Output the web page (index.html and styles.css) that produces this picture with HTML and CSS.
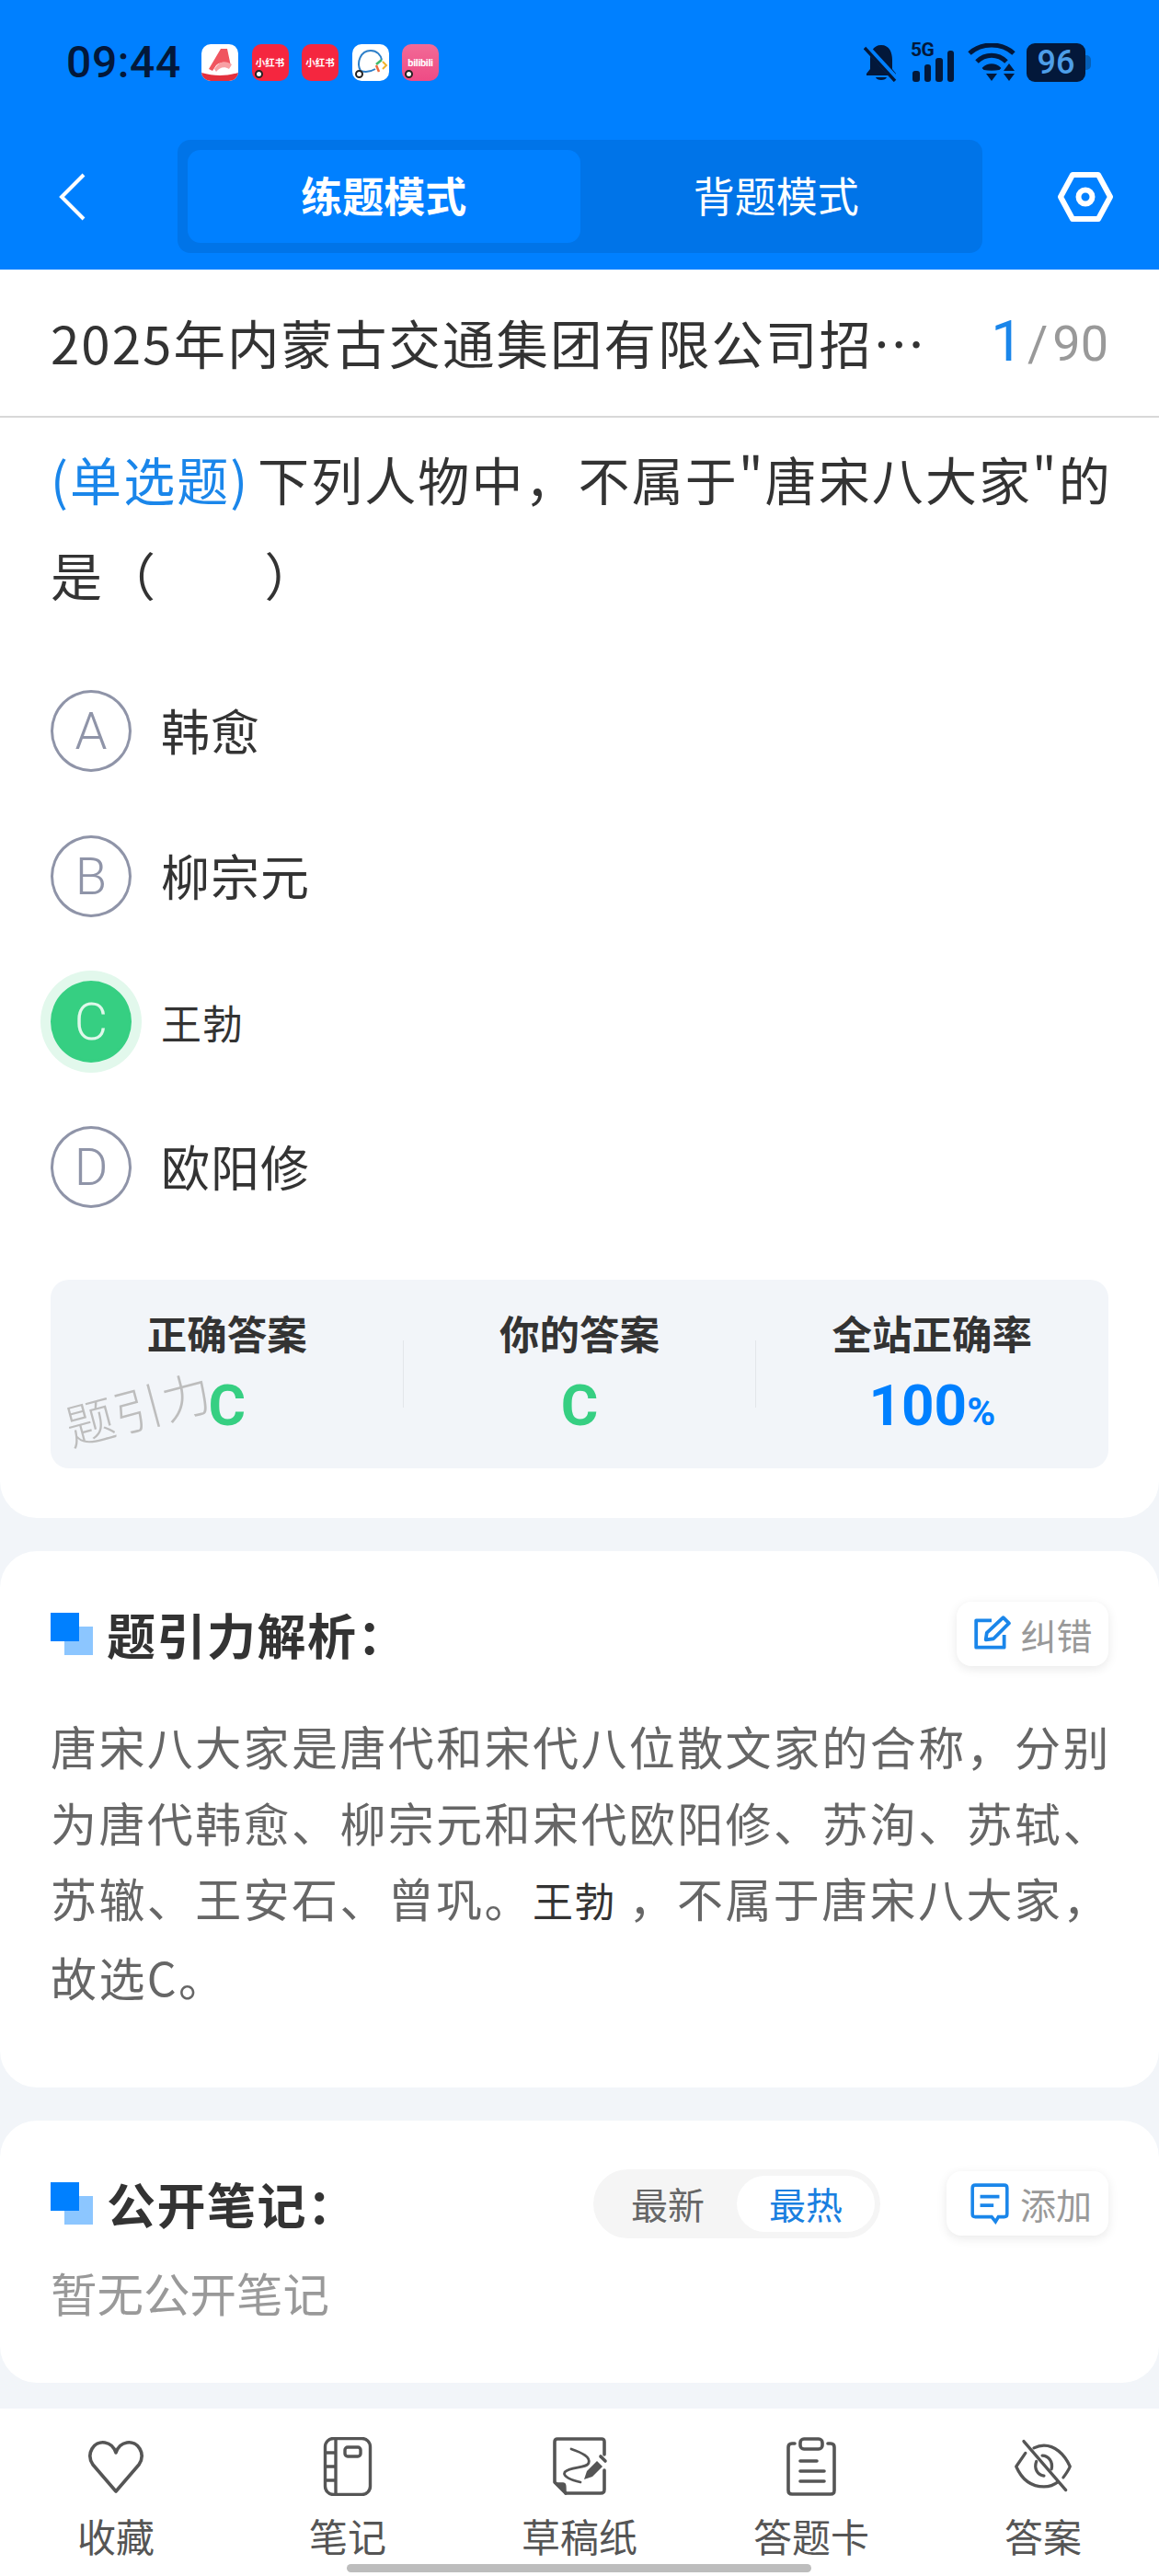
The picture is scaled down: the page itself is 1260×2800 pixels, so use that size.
FILE: index.html
```html
<!DOCTYPE html>
<html lang="zh">
<head>
<meta charset="utf-8">
<title>练题模式</title>
<link rel="stylesheet" href="styles.css">
</head>
<body>
<div class="page">
  <header class="top">
    <div class="status">
      <span class="time">09:44</span>
      <div class="apps">
        <span class="app app-white">
          <svg viewBox="0 0 40 40"><path d="M8 27 L21 5 L28 5 L32 24 L26 25 C24 20 20 19 16 23 L12 29 Z" fill="#f0555f"/><path d="M14 27 C20 17 27 18 33 22 L30 27 C25 24 20 25 16 30Z" fill="#f8a0a4"/><path d="M0 31 C14 35 26 35 40 31 V40 H0Z" fill="#e3303d"/></svg>
        </span>
        <span class="app app-red"><span class="app-text">小红书</span><i class="dot"></i></span>
        <span class="app app-red"><span class="app-text">小红书</span></span>
        <span class="app app-white">
          <svg viewBox="0 0 40 40"><path d="M9 29 C4 20 9 7 20 7 C27 7 31 12 32 17" fill="none" stroke="#2d7fc9" stroke-width="2"/><path d="M9 29 C15 31 20 30 25 27" fill="none" stroke="#2d7fc9" stroke-width="2"/><path d="M32 17 L26 22" stroke="#3fb86b" stroke-width="2.5"/><path d="M26 23 L29 30" stroke="#ef6a3c" stroke-width="2.5"/><path d="M33 19 L37 23 L33 27" fill="none" stroke="#f0b429" stroke-width="2"/></svg>
          <i class="dot"></i>
        </span>
        <span class="app app-pink"><span class="app-text app-text-sm">bilibili</span><i class="dot"></i></span>
      </div>
      <div class="sys">
        <svg class="sys-bell" viewBox="0 0 38 42"><path d="M19 2 C28 2 31 10 31 18 V28 L35 33 V35 H3 V33 L7 28 V18 C7 10 10 2 19 2Z M13 37 H25 C24 41 14 41 13 37Z" fill="#03183a"/><path d="M2 3 L36 40" stroke="#0080ff" stroke-width="7"/><path d="M1 5 L34 41" stroke="#03183a" stroke-width="3.4"/></svg>
        <span class="sig">
          <span class="sig-5g">5G</span>
          <span class="bars"><i class="b1"></i><i class="b2"></i><i class="b3"></i><i class="b4"></i></span>
        </span>
        <svg class="sys-wifi" viewBox="0 0 52 42"><g fill="none" stroke="#03183a" stroke-width="5"><path d="M2 11 C15 -1 37 -1 50 11"/><path d="M10 20 C19 11 33 11 42 20"/></g><path d="M17 27 C22 22 30 22 35 27 L34 28 C30 29 22 29 18 28Z" fill="#03183a" stroke="#03183a" stroke-width="2"/><path d="M20 33 H32 L26 41Z" fill="#03183a"/><path d="M47 23 L53 31 H41Z M41 34 H53 L47 42Z" fill="#03183a" transform="translate(-2 -1)"/></svg>
        <span class="batt"><span class="batt-num">96</span></span>
      </div>
    </div>
    <nav class="nav">
      <svg class="back" viewBox="0 0 30 52"><path d="M27 2 L3 26 L27 50" fill="none" stroke="#fff" stroke-width="4"/></svg>
      <div class="seg">
        <span class="seg-item seg-on">练题模式</span>
        <span class="seg-item">背题模式</span>
      </div>
      <svg class="hex" viewBox="0 0 60 54"><path d="M16 3 H44 L57 27 L44 51 H16 L3 27Z" fill="none" stroke="#fff" stroke-width="6" stroke-linejoin="round"/><circle cx="30" cy="27" r="7.5" fill="none" stroke="#fff" stroke-width="6"/></svg>
    </nav>
  </header>

  <main class="main">
    <section class="card card-q">
      <div class="title-row">
        <span class="title-text">2025年内蒙古交通集团有限公司招…</span>
        <span class="count"><b class="count-now">1</b><span class="count-sep">/</span><span>90</span></span>
      </div>
      <div class="q-body">
        <p class="question"><span class="qtype">(单选题)</span> 下列人物中，不属于"唐宋八大家"的<br>是（　　）</p>
        <ul class="options">
          <li class="opt"><span class="circle">A</span><span class="opt-text">韩愈</span></li>
          <li class="opt"><span class="circle">B</span><span class="opt-text">柳宗元</span></li>
          <li class="opt"><span class="circle circle-on">C</span><span class="opt-text opt-small">王勃</span></li>
          <li class="opt"><span class="circle">D</span><span class="opt-text">欧阳修</span></li>
        </ul>
        <div class="stats">
          <div class="stat"><span class="stat-label">正确答案</span><span class="stat-val green">C</span></div>
          <div class="stat stat-mid"><span class="stat-label">你的答案</span><span class="stat-val green">C</span></div>
          <div class="stat"><span class="stat-label">全站正确率</span><span class="stat-val blue">100<small class="pct">%</small></span></div>
          <span class="watermark">题引力</span>
        </div>
      </div>
    </section>

    <section class="card card-a">
      <div class="head">
        <h2 class="h"><i class="mark"></i>题引力解析：</h2>
        <span class="mini">
          <svg class="mini-ic" viewBox="0 0 40 40"><path d="M33 21 V34 H4 V6 H20" fill="none" stroke="#1a86ea" stroke-width="3.6" stroke-linejoin="round"/><path d="M14 26 L15 19 L32 3 L38 9 L22 25Z" fill="none" stroke="#1a86ea" stroke-width="3.6" stroke-linejoin="round"/></svg>
          纠错
        </span>
      </div>
      <p class="explain">唐宋八大家是唐代和宋代八位散文家的合称，分别为唐代韩愈、柳宗元和宋代欧阳修、苏洵、苏轼、苏辙、王安石、曾巩。<span class="explain-em">王勃</span> ，不属于唐宋八大家，<span class="nb">故选C。</span></p>
    </section>

    <section class="card card-n">
      <div class="head">
        <h2 class="h"><i class="mark"></i>公开笔记：</h2>
        <div class="head-right">
          <div class="toggle"><span class="tg">最新</span><span class="tg tg-on">最热</span></div>
          <span class="mini mini-add">
            <svg class="mini-ic" viewBox="0 0 40 44"><path d="M5 3 H35 C37 3 38 4 38 6 V33 C38 35 37 36 35 36 H29 L26 41 L22 36 H5 C3 36 2 35 2 33 V6 C2 4 3 3 5 3Z" fill="none" stroke="#1a86ea" stroke-width="3.4"/><path d="M10 15 H30 M10 24 H24" stroke="#1a86ea" stroke-width="3.6"/></svg>
            添加
          </span>
        </div>
      </div>
      <p class="empty">暂无公开笔记</p>
    </section>
  </main>

  <footer class="tabs">
    <div class="tab">
      <svg class="tab-ic" viewBox="0 0 64 64"><path d="M32 59 L7 30 C-1 18 8 4 20 6 C26 7 30 11 32 17 C34 11 38 7 44 6 C56 4 65 18 57 30Z" fill="none" stroke="#555" stroke-width="3.6" stroke-linejoin="round"/></svg>
      <span>收藏</span>
    </div>
    <div class="tab">
      <svg class="tab-ic" viewBox="0 0 64 64"><g fill="none" stroke="#555" stroke-width="3.4"><rect x="7.5" y="1.5" width="49" height="61" rx="9"/><path d="M19 2 V62 M8 17 H19 M8 32 H19 M8 47 H19"/><rect x="29" y="11" width="17" height="10" rx="3"/></g></svg>
      <span>笔记</span>
    </div>
    <div class="tab">
      <svg class="tab-ic" viewBox="0 0 64 64"><g fill="none" stroke="#555" stroke-width="3.6" stroke-linejoin="round" stroke-linecap="round"><path d="M17 61 H55 C58 61 59 60 59 57 V36"/><path d="M59 19 V5 C59 3 58 2 56 2 H8 C6 2 5 3 5 5 V49 L17 61"/><path d="M23 13 C35 17 44 22 42 28 C40 34 22 32 16 38 C13 43 24 47 33 49" stroke-width="2.8"/></g><path d="M5 50 H14 C17 50 17 52 17 61Z" fill="#555" stroke="#555" stroke-width="1.5" stroke-linejoin="round"/><path d="M37 46 L40 37 L51 26 L57 32 L46 43Z" fill="#555"/><path d="M55 21 L60 26" stroke="#555" stroke-width="3.6" stroke-linecap="round"/></svg>
      <span>草稿纸</span>
    </div>
    <div class="tab">
      <svg class="tab-ic" viewBox="0 0 64 64"><g fill="none" stroke="#555" stroke-width="3.6" stroke-linecap="round" stroke-linejoin="round"><path d="M14 7 H11 C8 7 7 9 7 11 V58 C7 61 9 62 11 62 H53 C56 62 57 61 57 58 V11 C57 9 56 7 53 7 H50"/><rect x="20" y="2" width="24" height="11" rx="4"/><path d="M20 26 H38 M20 37 H46 M20 48 H46"/></g></svg>
      <span>答题卡</span>
    </div>
    <div class="tab">
      <svg class="tab-ic" viewBox="0 0 70 64"><g fill="none" stroke="#555" stroke-width="3.6" stroke-linecap="round" stroke-linejoin="round"><path d="M14 16 L3 32 C10 48 22 56 36 56 C42 56 48 54 53 50"/><path d="M24 10 C28 8 32 7 36 7 C48 7 60 16 67 32 C65 37 62 41 59 45"/><path d="M12 2 L62 60"/><path d="M27 26 C24 34 28 42 36 43"/><path d="M34 19 C41 19 47 26 45 35"/></g></svg>
      <span>答案</span>
    </div>
    <i class="home"></i>
  </footer>
</div>
</body>
</html>
```

FILE: styles.css
```css
* { box-sizing: border-box; }
html, body { margin: 0; padding: 0; }
body {
  width: 1260px;
  background: #f2f5f9;
  font-family: "Noto Sans CJK SC", "Noto Sans", sans-serif;
  color: #333;
}
.page { position: relative; width: 1260px; height: 2800px; overflow: hidden; display: flex; flex-direction: column; }
p, h2, ul { margin: 0; padding: 0; }
ul { list-style: none; }

.top { height: 293px; background: #0080ff; flex: none; }
.status { display: flex; align-items: center; height: 136px; padding: 0 0 0 72px; }
.time { font: 500 48px/1 "Roboto", sans-serif; color: #03183a; width: 147px; letter-spacing: .6px; }
.apps { display: flex; gap: 14.5px; }
.app { position: relative; width: 40px; height: 40px; border-radius: 10px; display: flex; align-items: center; justify-content: center; overflow: visible; }
.app svg { width: 40px; height: 40px; border-radius: 10px; display: block; }
.app-white { background: #fff; }
.app-red { background: #f5263f; }
.app-pink { background: linear-gradient(#f26a96, #ee4b85); }
.app-text { color: #fff; font-size: 10.5px; font-weight: 700; line-height: 1; white-space: nowrap; }
.app-text-sm { font: 700 11px/1 "Roboto", sans-serif; letter-spacing: -.3px; }
.dot { position: absolute; left: 3px; bottom: 3px; width: 9px; height: 9px; border-radius: 50%; background: #fff; border: 2.5px solid #222; }
.sys { margin-left: auto; display: flex; align-items: center; margin-right: 80px; height: 42px; }
.sys-bell { width: 38px; height: 42px; margin-right: 13px; }
.sig { position: relative; width: 50px; height: 42px; margin-right: 12px; }
.sig-5g { position: absolute; left: 0; top: -4px; font: 700 21px/22px "Roboto", sans-serif; color: #03183a; letter-spacing: -.5px; }
.bars { position: absolute; left: 2px; bottom: 0; display: flex; align-items: flex-end; gap: 5px; }
.bars i { display: block; width: 7.5px; background: #03183a; border-radius: 3px; }
.b1 { height: 12px; } .b2 { height: 19px; } .b3 { height: 26px; } .b4 { height: 34px; }
.sys-wifi { width: 52px; height: 42px; margin-right: 12px; }
.batt { position: relative; width: 64px; height: 42px; background: #03183a; border-radius: 9px; display: flex; align-items: center; justify-content: center; }
.batt::after { content: ""; position: absolute; left: 64px; top: 13px; width: 6px; height: 16px; background: #0560b8; border-radius: 0 5px 5px 0; }
.batt-num { font: 500 36px/1 "Roboto", sans-serif; color: #4d9ee8; }

.nav { display: flex; align-items: center; height: 123px; margin-top: 16px; padding-left: 64px; }
.back { width: 30px; height: 52px; flex: none; }
.seg { width: 875px; height: 123px; margin-left: 99px; padding: 11px; background: #0074e8; border-radius: 14px; display: flex; }
.seg-item { flex: 1; display: flex; align-items: center; justify-content: center; color: #fff; font-size: 45px; border-radius: 14px; padding-bottom: 4px; }
.seg-on { background: #0080ff; font-weight: 700; }
.hex { width: 60px; height: 54px; flex: none; margin-left: 82px; }

.main { flex: 1; min-height: 0; display: flex; flex-direction: column; gap: 36px; }
.card { background: #fff; }
.card-q { height: 1357px; border-radius: 0 0 40px 40px; }
.card-a { height: 583px; border-radius: 40px; padding: 0 55px; }
.card-n { height: 285px; border-radius: 40px; padding: 0 55px; }

.title-row { height: 161px; border-bottom: 2px solid #d8d8d8; display: flex; align-items: center; justify-content: space-between; padding: 0 55px 4px; }
.title-text { font-size: 56.5px; letter-spacing: 2px; color: #333; white-space: nowrap; }
.count { display: flex; align-items: baseline; font-family: "Roboto", sans-serif; font-size: 54px; color: #999; }
.count-now { font-weight: 400; font-size: 62px; color: #1a86ea; }
.count-sep { margin: 0 5px; }

.q-body { padding: 0 55px; }
.question { font-size: 56px; line-height: 104px; color: #333; margin-top: 14px; letter-spacing: 2.1px; word-spacing: -6px; white-space: nowrap; }
.qtype { color: #1a86ea; }
.options { margin-top: 74px; display: flex; flex-direction: column; gap: 69px; }
.opt { display: flex; align-items: center; height: 89px; }
.circle { width: 88px; height: 89px; border: 3px solid #8f94a8; border-radius: 50%; color: #8f94a8; display: flex; align-items: center; justify-content: center; font: 300 56px/1 "Roboto", sans-serif; flex: none; }
.circle-on { background: #36cf82; border-color: #36cf82; color: #dff8ea; box-shadow: 0 0 0 11px #e2f8ec; }
.opt-text { margin-left: 32px; font-size: 53px; color: #333; letter-spacing: 1px; padding-bottom: 3px; }
.opt-small { font-size: 44px; margin-left: 32px; padding-bottom: 0; letter-spacing: 1px; }

.stats { position: relative; margin-top: 78px; height: 205px; background: #f2f5f9; border-radius: 20px; display: flex; }
.stat { flex: 1; display: flex; flex-direction: column; align-items: center; padding-top: 30px; }
.stat-mid { position: relative; }
.stat-mid::before, .stat-mid::after { content: ""; position: absolute; top: 66px; height: 73px; width: 1px; background: #e3e6ea; }
.stat-mid::before { left: 0; }
.stat-mid::after { right: 0; }
.stat-label { font-size: 43.5px; font-weight: 700; line-height: 56px; color: #333; }
.stat-val { font: 700 62px/68px "Roboto", sans-serif; margin-top: 17px; }
.green { color: #36cf82; }
.blue { color: #0080ff; }
.pct { font-size: 42px; }
.watermark { position: absolute; left: 14px; top: 108px; font-size: 53px; line-height: 60px; color: #bdbdbd; transform: rotate(-15deg); letter-spacing: 1px; font-weight: 300; }

.head { display: flex; align-items: center; justify-content: space-between; height: 70px; margin-top: 55px; }
.h { display: flex; align-items: center; font-size: 53px; font-weight: 700; color: #333; line-height: 70px; letter-spacing: 1.5px; }
.mark { position: relative; display: block; width: 46px; height: 46px; margin-right: 15px; }
.mark::before { content: ""; position: absolute; left: 0; top: 0; width: 31px; height: 31px; background: #0080ff; z-index: 1; }
.mark::after { content: ""; position: absolute; left: 15px; top: 15px; width: 31px; height: 31px; background: #8cc6ff; }
.mini { display: flex; align-items: center; justify-content: center; gap: 10px; width: 165px; height: 70px; background: #fff; border-radius: 16px; box-shadow: 0 3px 12px rgba(0,0,0,.09); color: #999; font-size: 39px; }
.mini-ic { width: 42px; height: 42px; flex: none; }
.mini-add { width: 176px; padding-left: 6px; }
.mini-add .mini-ic { width: 46px; height: 46px; }
.head-right { display: flex; align-items: center; gap: 72px; }
.toggle { width: 312px; height: 75px; background: #f5f5f5; border-radius: 38px; padding: 7px 6px; display: flex; }
.tg { flex: 1; display: flex; align-items: center; justify-content: center; font-size: 40px; color: #666; border-radius: 31px; }
.tg-on { flex: none; width: 150px; background: #fff; color: #1a7fe0; }

.explain { margin-top: 45px; margin-right: -6px; font-size: 50px; line-height: 82.5px; color: #666; letter-spacing: 2.4px; }
.explain-em { font-size: 44px; color: #333; letter-spacing: 1.5px; }
.nb { white-space: nowrap; }
.empty { margin-top: 26px; font-size: 50.5px; line-height: 70px; color: #999; }

.tabs { position: relative; height: 182px; flex: none; background: #fff; display: flex; }
.tab { flex: 1; display: flex; flex-direction: column; align-items: center; padding-top: 31px; color: #555; font-size: 42px; line-height: 60px; }
.tab-ic { width: 64px; height: 64px; display: block; margin-bottom: 13px; }
.home { position: absolute; left: 377px; bottom: 4px; width: 505px; height: 9px; border-radius: 5px; background: #bdbdbd; }
```
